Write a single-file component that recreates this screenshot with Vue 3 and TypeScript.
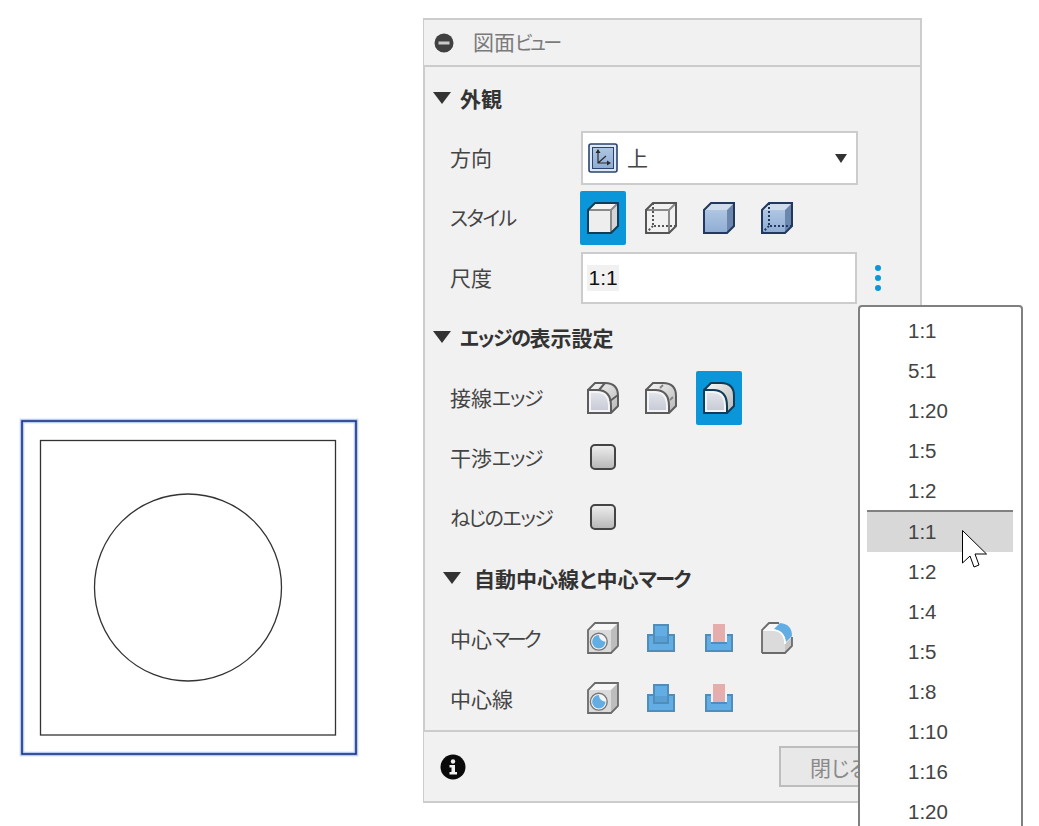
<script setup lang="ts">
const styleIcons = ['cube-selected', 'cube-wire', 'cube-solid', 'cube-hidden'];
const edgeIcons = ['edge-solid', 'edge-dash', 'edge-selected'];
const markIcons = ['mark-cube', 'mark-boss', 'mark-pocket', 'mark-round'];
const lineIcons = ['mark-cube', 'mark-boss', 'mark-pocket'];

const scales = ['1:1', '5:1', '1:20', '1:5', '1:2', '1:1', '1:2', '1:4', '1:5', '1:8', '1:10', '1:16', '1:20'];
const hoverIndex = 5;

// the boss and pocket icons are drawn a little smaller than the cubes
function iconSize(icon: string): number {
  return icon === 'mark-boss' || icon === 'mark-pocket' ? 28 : 32;
}
</script>

<template>
  <div class="page">
    <svg class="defs" aria-hidden="true">
      <defs>
        <linearGradient id="g-blue" x1="0" y1="0" x2="0" y2="1">
          <stop offset="0" stop-color="#afc6e3" />
          <stop offset="1" stop-color="#8eacd3" />
        </linearGradient>
        <linearGradient id="g-edge" x1="0" y1="0" x2="1" y2="1">
          <stop offset="0" stop-color="#fafafa" />
          <stop offset="1" stop-color="#b5b5b5" />
        </linearGradient>
        <linearGradient id="g-face" x1="0" y1="0" x2="0" y2="1">
          <stop offset="0" stop-color="#e2e4ea" />
          <stop offset="1" stop-color="#c8cad6" />
        </linearGradient>
      </defs>

      <symbol id="cube-selected" viewBox="0 0 32 32">
        <path d="M1 8 8 1H31L24 8Z" fill="#f4f4f4" />
        <path d="M24 8 31 1V24L24 31Z" fill="#d5d5d5" />
        <rect x="1" y="8" width="23" height="23" fill="#eeeeee" />
        <path d="M1 8H24V31M24 8 31 1" fill="none" stroke="#8a8a8a" stroke-width="2" />
        <path d="M1 31V8L8 1H31V24L24 31Z" fill="none" stroke="#0f3c58" stroke-width="2" />
      </symbol>
      <symbol id="cube-wire" viewBox="0 0 32 32">
        <path d="M8 1V24H31M8 24 1 31" fill="none" stroke="#555" stroke-width="2" stroke-dasharray="2 2" />
        <path d="M1 8H24V31M24 8 31 1" fill="none" stroke="#8a8a8a" stroke-width="2" />
        <path d="M1 31V8L8 1H31V24L24 31Z" fill="none" stroke="#555" stroke-width="2" />
      </symbol>
      <symbol id="cube-solid" viewBox="0 0 32 32">
        <path d="M1 8 8 1H31L24 8Z" fill="#cfdced" />
        <path d="M24 8 31 1V24L24 31Z" fill="#6c87ae" />
        <rect x="1" y="8" width="23" height="23" fill="url(#g-blue)" />
        <path d="M1 31V8L8 1H31V24L24 31Z" fill="none" stroke="#22395f" stroke-width="2" />
      </symbol>
      <symbol id="cube-hidden" viewBox="0 0 32 32">
        <path d="M1 8 8 1H31L24 8Z" fill="#cfdced" />
        <path d="M24 8 31 1V24L24 31Z" fill="#6c87ae" />
        <rect x="1" y="8" width="23" height="23" fill="url(#g-blue)" />
        <path d="M8 1V24H31M8 24 1 31" fill="none" stroke="#22395f" stroke-width="2" stroke-dasharray="2 2" />
        <path d="M1 31V8L8 1H31V24L24 31Z" fill="none" stroke="#22395f" stroke-width="2" />
      </symbol>

      <symbol id="edge-solid" viewBox="0 0 32 32">
        <path d="M1 8 8 1H18Q31 1 31 14V24L24 31Z" fill="url(#g-edge)" />
        <path d="M1 8H10Q24 8 24 24V31H1Z" fill="#f4f4f6" />
        <path d="M4 11H9Q21 11 21 24V28H4Z" fill="url(#g-face)" />
        <path d="M1 8 8 1H18Q31 1 31 14V24L24 31H1V8H10Q24 8 24 24V31" fill="none" stroke="#5c5c5c" stroke-width="2" />
        <path d="M12 8 18 1M23 19 31 13" fill="none" stroke="#5c5c5c" stroke-width="2" />
      </symbol>
      <symbol id="edge-dash" viewBox="0 0 32 32">
        <path d="M1 8 8 1H18Q31 1 31 14V24L24 31Z" fill="url(#g-edge)" />
        <path d="M1 8H10Q24 8 24 24V31H1Z" fill="#f4f4f6" />
        <path d="M4 11H9Q21 11 21 24V28H4Z" fill="url(#g-face)" />
        <path d="M1 8 8 1H18Q31 1 31 14V24L24 31H1V8H10Q24 8 24 24V31" fill="none" stroke="#5c5c5c" stroke-width="2" />
        <path d="M15 6 18 3M25 18 28 15" fill="none" stroke="#858585" stroke-width="2" />
      </symbol>
      <symbol id="edge-selected" viewBox="0 0 32 32">
        <path d="M1 8 8 1H18Q31 1 31 14V24L24 31Z" fill="url(#g-edge)" />
        <path d="M1 8H10Q24 8 24 24V31H1Z" fill="#f4f4f6" />
        <path d="M4 11H9Q21 11 21 24V28H4Z" fill="url(#g-face)" />
        <path d="M1 8 8 1H18Q31 1 31 14V24L24 31H1V8H10Q24 8 24 24V31" fill="none" stroke="#0f3c58" stroke-width="2" />
      </symbol>

      <symbol id="mark-cube" viewBox="0 0 32 32">
        <path d="M1 8 8 1H31L24 8Z" fill="#f7f7f7" />
        <path d="M24 8 31 1V24L24 31Z" fill="#bdbdbd" />
        <rect x="1" y="8" width="23" height="23" fill="#dbdbdb" />
        <path d="M1 31V8L8 1H31V24L24 31Z" fill="none" stroke="#6b6b6b" stroke-width="1.8" />
        <circle cx="11.8" cy="19.7" r="8.4" fill="#f4f4f4" stroke="#777" stroke-width="1.4" />
        <path d="M11.8 13A6.7 6.7 0 1 0 18.5 19.7Q12.5 19 11.8 13Z" fill="#62aee4" />
      </symbol>
      <symbol id="mark-boss" viewBox="0 0 28 28">
        <rect x="1" y="11" width="26" height="16" fill="#62aee4" stroke="#4f8dbb" stroke-width="2" />
        <rect x="7" y="1" width="14" height="18" fill="#62aee4" stroke="#4f8dbb" stroke-width="2" />
        <rect x="8" y="12" width="12" height="6" fill="#5a9fd4" />
      </symbol>
      <symbol id="mark-pocket" viewBox="0 0 28 28">
        <path d="M1 11H7V19H21V11H27V27H1Z" fill="#62aee4" stroke="#4f8dbb" stroke-width="2" />
        <rect x="6" y="10" width="16" height="8" fill="#f1f1f1" />
        <rect x="8" y="0" width="12" height="18" fill="#e5aeac" />
      </symbol>
      <symbol id="mark-round" viewBox="0 0 32 32">
        <path d="M1 8 8 1H18L12 8Z" fill="#f7f7f7" />
        <path d="M13 7 19 1Q31 2 31 14L25 20Q24 9 13 7Z" fill="#62aee4" />
        <path d="M31 15V24L24 31V22Z" fill="#c6c6c6" />
        <path d="M1 8H10Q24 8 24 24V31H1Z" fill="#dbdbdb" />
        <path d="M1 8H10Q24 8 24 22" fill="none" stroke="#fff" stroke-width="1.5" />
        <path d="M1 31V8L8 1H18M31 15V24L24 31H1" fill="none" stroke="#6b6b6b" stroke-width="1.8" />
      </symbol>
    </svg>

    <div class="sheet">
      <svg class="drawing" width="340" height="340" viewBox="0 0 340 340">
        <rect x="3" y="4" width="334" height="333" fill="#fff" stroke="#d8e5fc" stroke-width="5" />
        <rect x="3" y="4" width="334" height="333" fill="none" stroke="#93b3ee" stroke-width="3" />
        <rect x="3" y="4" width="334" height="333" fill="none" stroke="#16266f" stroke-width="1.4" />
        <rect x="21.5" y="23.5" width="295" height="294.5" fill="none" stroke="#333" stroke-width="1.3" />
        <circle cx="169" cy="170.5" r="93.5" fill="none" stroke="#333" stroke-width="1.3" />
      </svg>
    </div>

    <div class="panel">
      <header class="title-bar">
        <svg class="title-icon" width="20" height="20" viewBox="0 0 20 20">
          <circle cx="10" cy="10" r="9.5" fill="#404040" />
          <rect x="4.5" y="8.5" width="11" height="3" fill="#c9c9c9" />
        </svg>
        <span class="title-text">図面<span class="kana">ビュー</span></span>
      </header>

      <div class="panel-body">
        <div class="heading first"><i class="tri"></i><span>外観</span></div>

        <div class="row select-row">
          <span class="label">方向</span>
          <div class="select">
            <svg class="dir-icon" width="30" height="30" viewBox="0 0 30 30">
              <rect x="1" y="1" width="28" height="28" rx="2" fill="#dde7f5" stroke="#2a446e" stroke-width="1.6" />
              <rect x="4.5" y="4.5" width="21" height="21" fill="url(#g-blue)" stroke="#2a446e" />
              <path d="M10 8V20H21M10 20 18 13" fill="none" stroke="#2c2c2c" stroke-width="1.2" />
              <path d="M10 6 7.5 10H12.5ZM23 20 19 17.5V22.5Z" fill="#2c2c2c" />
            </svg>
            <span class="select-text">上</span>
            <i class="select-arrow"></i>
          </div>
        </div>

        <div class="row style-row">
          <span class="label"><span class="kana">スタイル</span></span>
          <div class="icons">
            <div v-for="(icon, i) in styleIcons" :key="icon" class="icon-btn" :class="{ active: i === 0 }">
              <svg width="32" height="32"><use :href="'#' + icon" /></svg>
            </div>
          </div>
        </div>

        <div class="row scale-row">
          <span class="label">尺度</span>
          <div class="input"><span class="input-value">1:1</span></div>
          <div class="dots"><i></i><i></i><i></i></div>
        </div>

        <div class="heading second"><i class="tri"></i><span><span class="kana">エッジの</span>表示設定</span></div>

        <div class="row tall">
          <span class="label">接線<span class="kana">エッジ</span></span>
          <div class="icons">
            <div v-for="(icon, i) in edgeIcons" :key="icon" class="icon-btn" :class="{ active: i === 2 }">
              <svg width="32" height="32"><use :href="'#' + icon" /></svg>
            </div>
          </div>
        </div>
        <div class="row tall up">
          <span class="label">干渉<span class="kana">エッジ</span></span>
          <div class="icon-btn"><i class="check"></i></div>
        </div>
        <div class="row tall up">
          <span class="label"><span class="kana">ねじのエッジ</span></span>
          <div class="icon-btn"><i class="check"></i></div>
        </div>

        <div class="heading third"><i class="tri"></i><span>自動中心線と中心<span class="kana">マーク</span></span></div>

        <div class="row tall up">
          <span class="label">中心<span class="kana tight">マーク</span></span>
          <div class="icons">
            <div v-for="icon in markIcons" :key="icon" class="icon-btn">
              <svg :width="iconSize(icon)" :height="iconSize(icon)"><use :href="'#' + icon" /></svg>
            </div>
          </div>
        </div>
        <div class="row tall up">
          <span class="label">中心線</span>
          <div class="icons">
            <div v-for="icon in lineIcons" :key="icon" class="icon-btn">
              <svg :width="iconSize(icon)" :height="iconSize(icon)"><use :href="'#' + icon" /></svg>
            </div>
          </div>
        </div>
      </div>

      <footer class="footer">
        <svg width="26" height="26" viewBox="0 0 26 26">
          <circle cx="13" cy="13" r="12.5" fill="#0a0a0a" />
          <circle cx="13" cy="7.5" r="2.2" fill="#f1f1f1" />
          <path d="M9.5 11H15V18H17V20.5H9.5V18H11.5V13.5H9.5Z" fill="#f1f1f1" />
        </svg>
        <button class="close-btn" type="button">閉じる</button>
      </footer>
    </div>

    <div class="menu">
      <div v-for="(scale, i) in scales" :key="i" class="menu-item" :class="{ hover: i === hoverIndex }">{{ scale }}</div>
    </div>

    <svg class="cursor" width="26" height="38" viewBox="0 0 26 38">
      <path d="M.5.5V33L8 26 12 37 17 35 13 24H24.5Z" fill="#fff" stroke="#000" stroke-width="1" />
    </svg>
  </div>
</template>

<style scoped>
.page {
  position: relative;
  display: flex;
  align-items: flex-start;
  width: 1039px;
  height: 826px;
  overflow: hidden;
  background: #fff;
  font-family: "Liberation Sans", "Noto Sans CJK JP", sans-serif;
  font-feature-settings: "palt";
  color: #333;
}

.defs {
  position: absolute;
  width: 0;
  height: 0;
}

.sheet {
  width: 423px;
  flex: none;
  padding: 417px 0 0 19px;
  box-sizing: border-box;
}

.drawing {
  display: block;
}

.panel {
  width: 499px;
  flex: none;
  margin-top: 18px;
  background: #f1f1f1;
}

.title-bar {
  display: flex;
  align-items: center;
  height: 49px;
  box-sizing: border-box;
  padding-left: 10px;
  border: 2px solid #ccc;
  border-left-width: 1px;
}

.title-icon {
  flex: none;
}

.title-text {
  margin: 0 0 3px 19px;
  font-size: 21px;
  color: #7a7a7a;
}

/* kana are set narrower than the kanji around them */
.kana {
  font-size: 20px;
  letter-spacing: -1.5px;
}

.kana.tight {
  letter-spacing: -3px;
}

.title-text .kana {
  font-size: 19px;
  letter-spacing: -2.5px;
}

.panel-body {
  height: 663px;
  box-sizing: border-box;
  border-left: 2px solid #ccc;
  border-right: 2px solid #ccc;
}

.heading {
  display: flex;
  align-items: center;
  padding-bottom: 2px;
  box-sizing: border-box;
  font-size: 21px;
  font-weight: 700;
  color: #333;
}

.heading.first {
  height: 64px;
  padding-left: 8px;
}

.heading.second {
  height: 64px;
  padding: 2px 0 0 8px;
}

.heading.third {
  height: 61px;
  padding-left: 18px;
}

.tri {
  width: 0;
  height: 0;
  margin-right: 9px;
  border-left: 9px solid transparent;
  border-right: 9px solid transparent;
  border-top: 12px solid #333;
}

.third .tri {
  margin-right: 13px;
}

.row {
  display: flex;
  align-items: center;
  padding-left: 25px;
}

.tall {
  height: 60px;
}

.up .icon-btn {
  margin-bottom: 2px;
}

.select-row {
  height: 54px;
  margin-bottom: 6px;
}

.style-row {
  height: 54px;
  margin-bottom: 7px;
}

.scale-row {
  height: 52px;
}

.label {
  width: 130px;
  flex: none;
  margin-bottom: 2px;
  font-size: 21px;
  color: #444;
}

.select {
  display: flex;
  align-items: center;
  width: 277px;
  height: 54px;
  box-sizing: border-box;
  margin-left: 1px;
  padding: 0 9px 0 5px;
  background: #fff;
  border: 2px solid #ccc;
}

.select-text {
  margin: 0 0 2px 9px;
  font-size: 21px;
  color: #444;
}

.select-arrow {
  width: 0;
  height: 0;
  margin-left: auto;
  border-left: 6px solid transparent;
  border-right: 6px solid transparent;
  border-top: 9px solid #333;
}

.icons {
  display: flex;
  gap: 12px;
}

.icon-btn {
  display: flex;
  align-items: center;
  justify-content: center;
  width: 46px;
  height: 54px;
  flex: none;
  border-radius: 2px;
}

.icon-btn svg {
  display: block;
}

.icon-btn.active {
  background: #0a96d8;
}

.check {
  display: block;
  width: 26px;
  height: 26px;
  box-sizing: border-box;
  border: 2px solid #444;
  border-radius: 5px;
  background: linear-gradient(#ececec, #b9b9b9);
}

.input {
  display: flex;
  align-items: center;
  width: 276px;
  height: 52px;
  box-sizing: border-box;
  margin-left: 1px;
  padding-left: 4px;
  background: #fff;
  border: 2px solid #ccc;
}

.input-value {
  padding: 2px 1.5px;
  font-size: 21px;
  line-height: 22px;
  color: #111;
  background: #f1f1f1;
}

.dots {
  display: flex;
  flex-direction: column;
  gap: 4px;
  margin-left: 18px;
}

.dots i {
  display: block;
  width: 6px;
  height: 6px;
  border-radius: 50%;
  background: #0a96d8;
}

.footer {
  display: flex;
  align-items: center;
  justify-content: space-between;
  height: 73px;
  box-sizing: border-box;
  padding: 0 0 0 16px;
  border: 2px solid #ccc;
  border-left-width: 1px;
  border-right: none;
}

.close-btn {
  width: 131px;
  height: 41px;
  margin-right: 12px;
  padding: 0 0 0 29px;
  text-align: left;
  font-family: inherit;
  font-feature-settings: inherit;
  font-size: 21px;
  color: #8a8a8a;
  background: #e8e8e8;
  border: 2px solid #bdbdbd;
}

.menu {
  position: absolute;
  top: 305px;
  left: 858px;
  width: 165px;
  box-sizing: border-box;
  padding: 4px 8px 0 7px;
  background: #fff;
  border: 2px solid #808080;
  border-radius: 4px;
}

.menu-item {
  height: 40px;
  padding-left: 41px;
  font-size: 20.5px;
  line-height: 40px;
  color: #444;
}

.menu-item.hover {
  height: 40px;
  margin-top: -1px;
  background: #d8d8d8;
  border-top: 2px solid #808080;
}

.cursor {
  position: absolute;
  top: 530px;
  left: 962px;
}
</style>

<style>
html,
body {
  background: #fff;
}
</style>
